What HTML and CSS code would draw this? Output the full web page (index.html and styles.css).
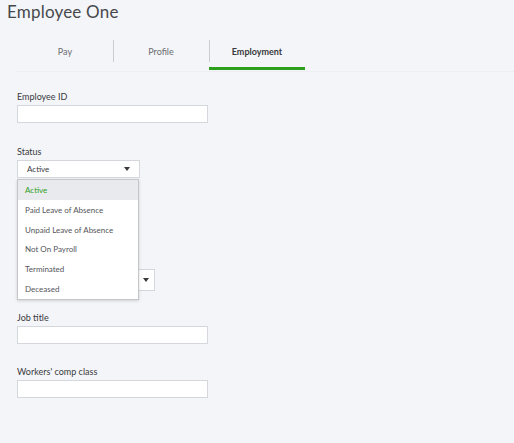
FILE: index.html
```html
<!DOCTYPE html>
<html lang="en">
    <head>
        <meta charset="UTF-8" />
        <meta name="viewport" content="width=device-width, initial-scale=1.0" />
        <link rel="stylesheet" href="styles.css">
        <title>Employee One</title>
    </head>
    <body>
        <header class="page-header">
            <h1 class="employee-name">Employee One</h1>
            <nav class="tabs">
                <div class="tab">Pay</div>
                <div class="tab">Profile</div>
                <div class="tab active">Employment</div>
            </nav>
        </header>
        <main class="form">
            <div class="field">
                <label>Employee ID</label>
                <input class="text-input" type="text" />
            </div>
            <div class="field status-field">
                <label>Status</label>
                <div class="select">
                    <span>Active</span>
                    <span class="caret"></span>
                </div>
                <ul class="dropdown">
                    <li class="selected">Active</li>
                    <li>Paid Leave of Absence</li>
                    <li>Unpaid Leave of Absence</li>
                    <li>Not On Payroll</li>
                    <li>Terminated</li>
                    <li>Deceased</li>
                </ul>
            </div>
            <!-- field sitting under the open status list -->
            <div class="field schedule-field">
                <div class="select wide">
                    <span></span>
                    <span class="caret"></span>
                </div>
            </div>
            <div class="field">
                <label>Job title</label>
                <input class="text-input" type="text" />
            </div>
            <div class="field">
                <label>Workers' comp class</label>
                <input class="text-input" type="text" />
            </div>
        </main>
    </body>
</html>
```

FILE: styles.css
```css
* {
    margin: 0;
    padding: 0;
    box-sizing: border-box;
}
:root {
    --bg: #f4f5f8;
    --text: #393a3d;
    --muted: #6b6c72;
    --border: #d4d7dc;
    --green: #2ca01c;
    --font-fam: 'Lato', 'Liberation Sans', sans-serif;
}
body {
    background-color: var(--bg);
    color: var(--text);
    font-family: var(--font-fam);
}

/* ======= header ======= */
.employee-name {
    font-size: 17px;
    font-weight: 400;
    color: #47484c;
    padding: 1px 0 0 7px;
    height: 40px;
    letter-spacing: 0.2px;
}
.tabs {
    display: flex;
    margin-left: 17px;
    border-bottom: 1px solid #eceef1;
    height: 32px;
}
.tab {
    width: 96px;
    font-size: 9px;
    color: var(--muted);
    display: flex;
    justify-content: center;
    padding-top: 6px;
    position: relative;
}
.tab + .tab::before {
    content: '';
    position: absolute;
    left: 0;
    top: 0;
    height: 22px;
    border-left: 1px solid #c9cbd0;
}
.tab.active {
    color: var(--text);
    font-weight: 700;
    border-bottom: 3px solid var(--green);
    height: 30px;
}

/* ======= form ======= */
.form {
    padding: 18px 0 0 17px;
}
.field {
    margin-bottom: 22px;
    position: relative;
}
.field label {
    display: block;
    font-size: 9px;
    line-height: 13px;
    margin-bottom: 2px;
}
.text-input {
    display: block;
    width: 191px;
    height: 18px;
    border: 1px solid var(--border);
    background: #fff;
}
.select {
    width: 123px;
    height: 18px;
    border: 1px solid var(--border);
    background: #fff;
    display: flex;
    justify-content: space-between;
    align-items: center;
    padding: 0 9px 0 9px;
    font-size: 8px;
}
.select.wide {
    width: 138px;
    height: 22px;
    padding-right: 5px;
}
.caret {
    width: 0;
    height: 0;
    border-left: 3px solid transparent;
    border-right: 3px solid transparent;
    border-top: 4px solid #393a3d;
}

/* status options list */
.dropdown {
    position: absolute;
    left: 0;
    top: 34px;
    width: 122px;
    list-style: none;
    background: #fff;
    border: 1px solid #c4c6ca;
    box-shadow: 0 1px 3px rgba(0, 0, 0, 0.15);
    z-index: 10;
}
.dropdown li {
    font-size: 8px;
    height: 19.8px;
    line-height: 21px;
    padding-left: 7px;
    color: #55565b;
}
.dropdown li.selected {
    background: #e9eaed;
    color: var(--green);
}

.schedule-field {
    margin-top: 91px;
    margin-bottom: 20px;
}
.schedule-field ~ .field {
    margin-bottom: 21px;
}
```
